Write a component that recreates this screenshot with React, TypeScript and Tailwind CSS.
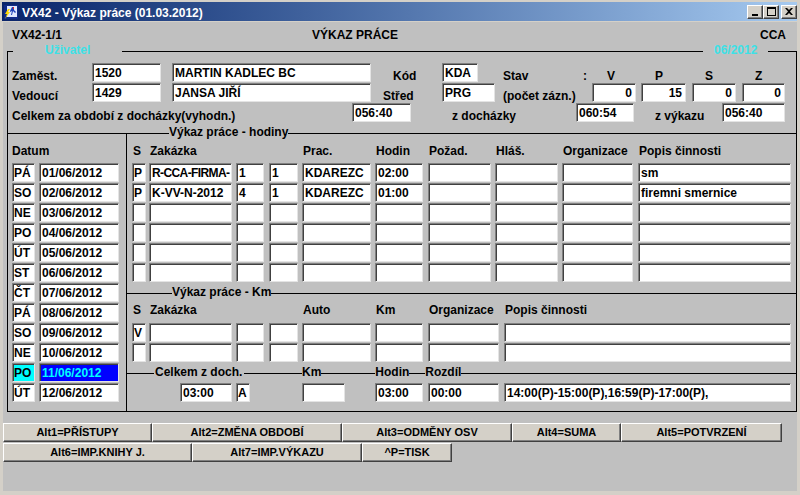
import React from "react";

const box =
  "h-[19px] shrink-0 border border-t-[#808080] border-l-[#808080] border-b-[#e4e4e4] border-r-[#e4e4e4] shadow-[inset_1px_1px_0_#404040] pt-[2px] text-[12px] leading-[14px] font-bold whitespace-nowrap overflow-hidden";

function Box({ v = "", className = "", right = false, color = "bg-white text-black" }: { v?: string; className?: string; right?: boolean; color?: string }) {
  return <div className={`${box} ${color} ${right ? "text-right pr-[3px]" : "pl-[2px]"} ${className}`}>{v}</div>;
}

function Lbl({ children, className = "" }: { children?: React.ReactNode; className?: string }) {
  return <div className={`shrink-0 text-[12px] leading-[14px] font-bold text-black whitespace-nowrap mb-[-1px] ${className}`}>{children}</div>;
}

const seg = "h-px bg-black shrink-0";
const cap = "text-[12px] leading-[13px] font-bold whitespace-nowrap mb-[2px]";

const hodCols = [
  "ml-[5px] w-[14px]",
  "ml-[3px] w-[83px]",
  "ml-[4px] w-[28px]",
  "ml-[5px] w-[29px]",
  "ml-[4px] w-[69px]",
  "ml-[4px] w-[48px]",
  "ml-[5px] w-[63px]",
  "ml-[4px] w-[63px]",
  "ml-[4px] w-[71px]",
  "ml-[5px] w-[153px]",
];
const hodHead = ["S", "Zakázka", "", "", "Prac.", "Hodin", "Požad.", "Hláš.", "Organizace", "Popis činnosti"];
const hodRows = [
  ["P", "R-CCA-FIRMA-", "1", "1", "KDAREZC", "02:00", "", "", "", "sm"],
  ["P", "K-VV-N-2012", "4", "1", "KDAREZC", "01:00", "", "", "", "firemni smernice"],
  ["", "", "", "", "", "", "", "", "", ""],
  ["", "", "", "", "", "", "", "", "", ""],
  ["", "", "", "", "", "", "", "", "", ""],
  ["", "", "", "", "", "", "", "", "", ""],
];

const kmCols = [
  "ml-[5px] w-[14px]",
  "ml-[3px] w-[83px]",
  "ml-[4px] w-[28px]",
  "ml-[5px] w-[29px]",
  "ml-[4px] w-[69px]",
  "ml-[4px] w-[48px]",
  "ml-[5px] w-[71px]",
  "ml-[5px] w-[287px]",
];
const kmHead = ["S", "Zakázka", "", "", "Auto", "Km", "Organizace", "Popis činnosti"];
const kmRows = [
  ["V", "", "", "", "", "", "", ""],
  ["", "", "", "", "", "", "", ""],
];

const days = [
  ["PÁ", "01/06/2012"],
  ["SO", "02/06/2012"],
  ["NE", "03/06/2012"],
  ["PO", "04/06/2012"],
  ["ÚT", "05/06/2012"],
  ["ST", "06/06/2012"],
  ["ČT", "07/06/2012"],
  ["PÁ", "08/06/2012"],
  ["SO", "09/06/2012"],
  ["NE", "10/06/2012"],
  ["PO", "11/06/2012"],
  ["ÚT", "12/06/2012"],
];

const btn =
  "h-[19px] shrink-0 bg-[#d4d0c8] border border-t-white border-l-white border-b-[#404040] border-r-[#404040] shadow-[inset_-1px_-1px_0_#808080] flex items-center justify-center text-[11px] font-bold text-black whitespace-nowrap";

const winBtn =
  "w-[16px] h-[14px] bg-[#d4d0c8] border border-t-white border-l-white border-b-[#404040] border-r-[#404040] shadow-[inset_-1px_-1px_0_#808080] flex items-center justify-center";

export default function App() {
  return (
    <div className="w-[800px] h-[495px] bg-[#d4d0c8] pt-[2px] pl-[2px] overflow-hidden font-['Liberation_Sans',Arial,sans-serif]">
      {/* title bar */}
      <div className="w-[795px] h-[19px] flex items-center bg-linear-to-r from-[#0a246a] to-[#a6caf0]">
        <svg width="14" height="14" viewBox="0 0 14 14" className="ml-[2px] shrink-0">
          <rect x="0" y="0" width="14" height="14" fill="#102a88" />
          <rect x="3" y="1" width="10" height="11" fill="#dfe8ff" />
          <path d="M8 2h2v3l2 2-1 1-2-2-1 4H7l1-4-2 1V6z" fill="#1b3fb8" />
          <path d="M9 2h1v2H9z" fill="#e02020" />
          <path d="M4 4 1 9h2l-2 5 5-7H4l2-3z" fill="#ffd800" />
        </svg>
        <div className="ml-[4px] pt-[2px] text-[12px] font-bold text-white leading-[14px]">VX42 - Výkaz práce (01.03.2012)</div>
        <div className="ml-auto flex items-center">
          <div className={winBtn}>
            <svg width="8" height="8" viewBox="0 0 8 8"><rect x="1" y="6" width="6" height="2" fill="#000" /></svg>
          </div>
          <div className={winBtn}>
            <svg width="9" height="9" viewBox="0 0 9 9"><path d="M0 0h9v9H0z M1 2v6h7V2z" fill="#000" fillRule="evenodd" /></svg>
          </div>
          <div className={`${winBtn} ml-[2px]`}>
            <svg width="8" height="7" viewBox="0 0 8 7"><path d="M0 0h2l2 2 2-2h2L5 3.5 8 7H6L4 5 2 7H0l3-3.5z" fill="#000" /></svg>
          </div>
        </div>
      </div>

      {/* client */}
      <div className="ml-[1px] mt-[1px] w-[794px] h-[469px] bg-[#c0c0c0] flex flex-col">
        <div className="h-[29px] flex pt-[6px] text-[12px] leading-[14px] font-bold text-black shrink-0">
          <div className="w-[309px] pl-[9px]">VX42-1/1</div>
          <div>VÝKAZ PRÁCE</div>
          <div className="ml-auto pr-[11px]">CCA</div>
        </div>

        {/* main group */}
        <div className="ml-[4px] w-[790px] h-[361px] shrink-0 border-l border-r border-b border-black flex flex-col">
          <div className="-mt-[6px] h-[13px] flex items-center">
            <span className={`${seg} w-[5px]`} />
            <span className={`${cap} w-[109px] pl-[32px] text-[#3ee0e6]`}>Uživatel</span>
            <span className="h-px bg-black flex-1" />
            <span className={`${cap} w-[65px] pl-[11px] text-[#3ee0e6]`}>06/2012</span>
            <span className={`${seg} w-[28px]`} />
          </div>

          <div className="mt-[5px] h-[19px] flex items-end">
            <Lbl className="w-[84px] pl-[4px]">Zaměst.</Lbl>
            <Box className="w-[69px]" v="1520" />
            <Box className="ml-[11px] w-[199px]" v="MARTIN KADLEC BC" />
            <Lbl className="w-[71px] pl-[22px]">Kód</Lbl>
            <Box className="w-[36px]" v="KDA" />
            <Lbl className="ml-[25px] w-[80px]">Stav</Lbl>
            <Lbl className="w-[24px]">:</Lbl>
            <Lbl className="w-[48px]">V</Lbl>
            <Lbl className="w-[50px]">P</Lbl>
            <Lbl className="w-[50px]">S</Lbl>
            <Lbl>Z</Lbl>
          </div>
          <div className="mt-[1px] h-[19px] flex items-end">
            <Lbl className="w-[84px] pl-[4px]">Vedoucí</Lbl>
            <Box className="w-[69px]" v="1429" />
            <Box className="ml-[11px] w-[199px]" v="JANSA JIŘÍ" />
            <Lbl className="w-[71px] pl-[12px]">Střed</Lbl>
            <Box className="w-[53px]" v="PRG" />
            <Lbl className="ml-[8px] w-[89px]">(počet zázn.)</Lbl>
            <Box className="w-[44px]" right v="0" />
            <Box className="ml-[5px] w-[45px]" right v="15" />
            <Box className="ml-[6px] w-[44px]" right v="0" />
            <Box className="ml-[6px] w-[43px]" right v="0" />
          </div>
          <div className="mt-[1px] h-[19px] flex items-end">
            <Lbl className="w-[344px] pl-[4px]">Celkem za období z docházky(vyhodn.)</Lbl>
            <Box className="w-[59px]" v="056:40" />
            <Lbl className="ml-[41px] w-[124px]">z docházky</Lbl>
            <Box className="w-[58px]" v="060:54" />
            <Lbl className="ml-[21px] w-[67px]">z výkazu</Lbl>
            <Box className="w-[63px]" v="056:40" />
          </div>

          <div className="mt-[5px] h-[13px] flex items-center">
            <span className={`${seg} w-[161px]`} />
            <span className={cap}>Výkaz práce - hodiny</span>
            <span className="h-px bg-black flex-1" />
          </div>

          <div className="-mt-[6px] flex-1 flex">
            {/* dates */}
            <div className="w-[118px] shrink-0 pt-[9px]">
              <div className="h-[20px] pl-[4px] pt-[1px] text-[12px] leading-[14px] font-bold">Datum</div>
              {days.map(([d, dt], i) => {
                const sel = i === 10;
                return (
                  <div key={i} className="h-[19px] mb-[1px] pl-[4px] flex">
                    <Box className="w-[23px] !pl-[1px]" v={d} color={sel ? "bg-[#00ffff] text-black" : "bg-white text-black"} />
                    <Box className="ml-[4px] w-[80px]" v={dt} color={sel ? "bg-[#0000ff] text-[#00ffff]" : "bg-white text-black"} />
                  </div>
                );
              })}
            </div>

            {/* records */}
            <div className="flex-1 border-l border-black pt-[9px] flex flex-col">
              <div className="h-[20px] pt-[1px] flex text-[12px] leading-[14px] font-bold">
                {hodHead.map((h, i) => (
                  <div key={i} className={`${hodCols[i]} shrink-0 pl-[1px] whitespace-nowrap`}>{h}</div>
                ))}
              </div>
              {hodRows.map((r, ri) => (
                <div key={ri} className="h-[19px] mb-[1px] flex">
                  {r.map((c, ci) => (
                    <Box
                      key={ci}
                      className={`${hodCols[ci]} ${ci === 0 ? "!pl-[1px]" : ""} ${ci === 1 && c.length > 11 ? "tracking-[-0.6px]" : ""}`}
                      v={c}
                    />
                  ))}
                </div>
              ))}

              <div className="mt-[4px] h-[13px] flex items-center">
                <span className={`${seg} w-[45px]`} />
                <span className={cap}>Výkaz práce - Km</span>
                <span className="h-px bg-black flex-1" />
              </div>
              <div className="mt-[3px] h-[20px] flex text-[12px] leading-[14px] font-bold">
                {kmHead.map((h, i) => (
                  <div key={i} className={`${kmCols[i]} shrink-0 pl-[1px] whitespace-nowrap`}>{h}</div>
                ))}
              </div>
              {kmRows.map((r, ri) => (
                <div key={ri} className="h-[19px] mb-[1px] flex">
                  {r.map((c, ci) => (
                    <Box key={ci} className={`${kmCols[ci]} ${ci === 0 ? "!pl-[1px]" : ""}`} v={c} />
                  ))}
                </div>
              ))}

              <div className="mt-[4px] h-[13px] flex items-center">
                <span className={`${seg} w-[27px]`} />
                <span className={`${cap} w-[90px] pl-[1px]`}>Celkem z doch.</span>
                <span className={`${seg} w-[58px]`} />
                <span className={cap}>Km</span>
                <span className={`${seg} w-[54px]`} />
                <span className={cap}>Hodin</span>
                <span className={`${seg} w-[16px]`} />
                <span className={cap}>Rozdíl</span>
                <span className="h-px bg-black flex-1" />
              </div>
              <div className="mt-[3px] h-[19px] flex">
                <Box className="ml-[53px] w-[52px]" v="03:00" />
                <Box className="ml-[4px] w-[14px] !pl-[1px]" v="A" />
                <Box className="ml-[52px] w-[43px]" />
                <Box className="ml-[30px] w-[48px]" v="03:00" />
                <Box className="ml-[5px] w-[71px]" v="00:00" />
                <Box className="ml-[5px] w-[287px]" v="14:00(P)-15:00(P),16:59(P)-17:00(P)," />
              </div>
            </div>
          </div>
        </div>

        {/* function keys */}
        <div className="mt-[11px] flex">
          <div className={`${btn} w-[149px]`}>Alt1=PŘÍSTUPY</div>
          <div className={`${btn} w-[190px]`}>Alt2=ZMĚNA OBDOBÍ</div>
          <div className={`${btn} w-[170px]`}>Alt3=ODMĚNY OSV</div>
          <div className={`${btn} w-[109px]`}>Alt4=SUMA</div>
          <div className={`${btn} w-[161px]`}>Alt5=POTVRZENÍ</div>
        </div>
        <div className="mt-[1px] flex">
          <div className={`${btn} w-[189px]`}>Alt6=IMP.KNIHY J.</div>
          <div className={`${btn} w-[170px]`}>Alt7=IMP.VÝKAZU</div>
          <div className={`${btn} w-[90px]`}>^P=TISK</div>
        </div>
      </div>
    </div>
  );
}
